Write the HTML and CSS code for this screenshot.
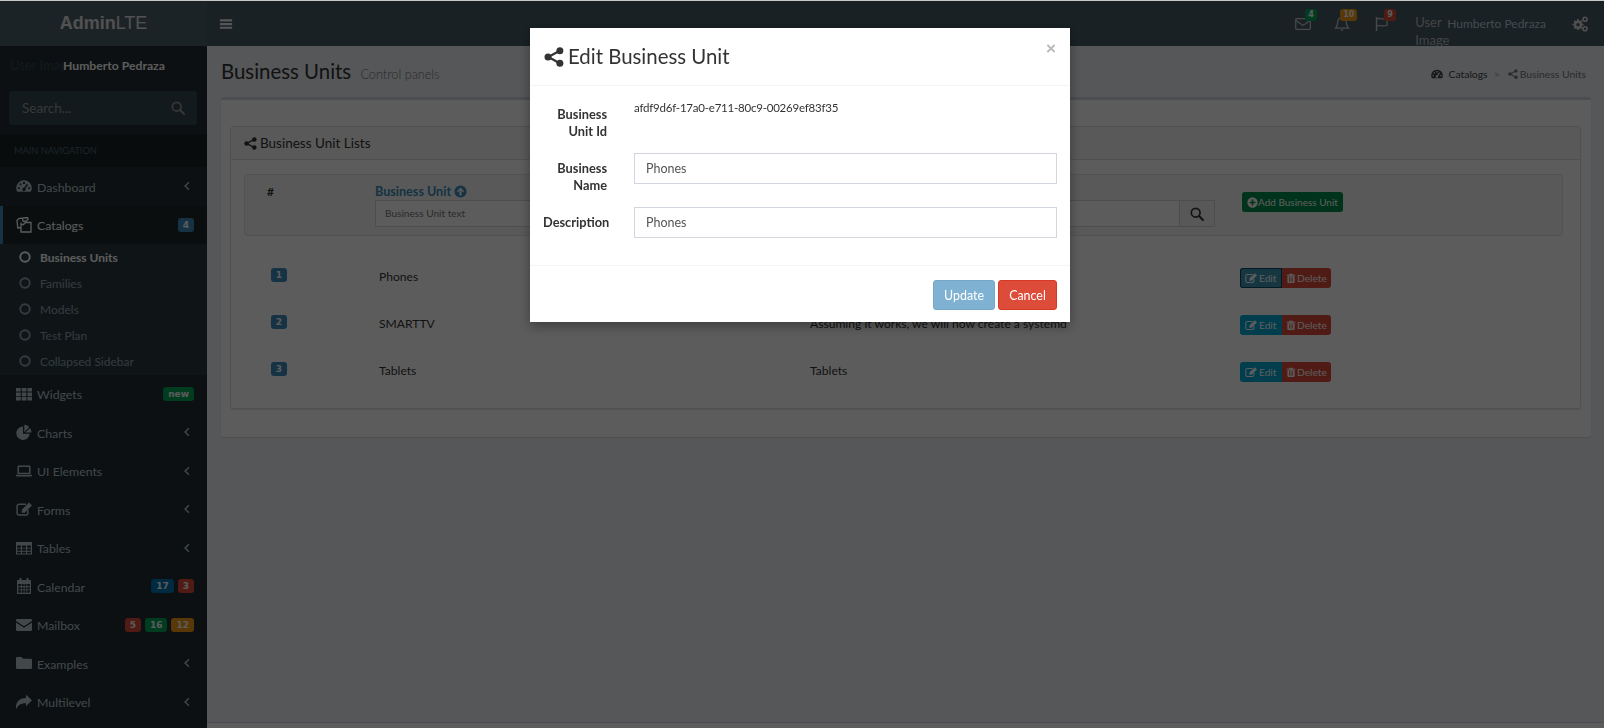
FILE: index.html
```html
<!DOCTYPE html>
<html lang="en">
<head>
<meta charset="utf-8">
<title>Business Units</title>
<link rel="stylesheet" href="styles.css">
</head>
<body>
<svg class="sprite" xmlns="http://www.w3.org/2000/svg">
  <symbol id="i-share" viewBox="0 0 16 16"><path d="M12.5 3 3.5 8l9 5" fill="none" stroke="currentColor" stroke-width="1.7"/><circle cx="12.7" cy="3" r="2.8"/><circle cx="3.2" cy="8" r="2.8"/><circle cx="12.7" cy="13" r="2.8"/></symbol>
  <symbol id="i-dash" viewBox="0 0 16 16"><path fill-rule="evenodd" d="M8 2.2A7.8 7.8 0 0 0 .2 10c0 1.4.4 2.7 1 3.8h13.6c.6-1.100 1-2.400 1-3.800A7.800 7.800 0 0 0 8 2.200zM7 4h2v2H7zM3.600 5.500h1.800v1.800H3.600zM2 9.300h1.800v1.800H2zM12.200 9.300H14v1.800h-1.800zM10.800 5.700l1.300 1-2.600 3.900a1.700 1.700 0 1 1-1.300-.9z"/></symbol>
  <symbol id="i-copy" viewBox="0 0 16 16"><path d="M6.500 1 2.800 1.500 1 3.500 1.800 11l3.200-.5M6.500 1 7 4.500M7 4.500l3.500-.5 1.500-1.800-.4-1.700-4.600.5M5 5.500V15h10V5.500H9.500L7.500 7.500H5" fill="none" stroke="currentColor" stroke-width="1.300"/></symbol>
  <symbol id="i-circle" viewBox="0 0 16 16"><circle cx="8" cy="8" r="5.400" fill="none" stroke="currentColor" stroke-width="2.200"/></symbol>
  <symbol id="i-th" viewBox="0 0 16 16"><path d="M0 2h4.700v3.600H0zM5.700 2h4.700v3.600H5.700zM11.400 2H16v3.600h-4.600zM0 6.400h4.700V10H0zM5.700 6.400h4.700V10H5.700zM11.400 6.400H16V10h-4.600zM0 10.800h4.700v3.600H0zM5.700 10.800h4.700v3.600H5.700zM11.400 10.800H16v3.600h-4.600z"/></symbol>
  <symbol id="i-pie" viewBox="0 0 16 16"><path d="M7 2.500a6.700 6.700 0 1 0 6.700 7.200H7z"/><path d="M8.300.8v7.500l4.900-5.400A7 7 0 0 0 8.300.8zM14 4l-4.600 4.600H15.500A7 7 0 0 0 14 4z"/></symbol>
  <symbol id="i-laptop" viewBox="0 0 16 16"><path fill-rule="evenodd" d="M2.500 2.500h11a1 1 0 0 1 1 1V11h-13V3.500a1 1 0 0 1 1-1zM3 4v5.800h10V4zM0 11.800h16v.8a1 1 0 0 1-1 1H1a1 1 0 0 1-1-1z"/></symbol>
  <symbol id="i-edit" viewBox="0 0 16 16"><path d="M10 3.200H3a1.900 1.900 0 0 0-1.900 1.900v7A1.900 1.900 0 0 0 3 14h7a1.900 1.900 0 0 0 1.900-1.900V9" fill="none" stroke="currentColor" stroke-width="1.400"/><path d="M13 1.500 16 4.500 8.800 11.700H5.800V8.700z"/></symbol>
  <symbol id="i-table" viewBox="0 0 16 16"><path fill-rule="evenodd" d="M0 2h16v12.500H0zM1.200 5.500v2.200h3.700V5.500zM6 5.500v2.200h4V5.500zM11.100 5.500v2.200h3.700V5.500zM1.200 8.600v2.200h3.700V8.600zM6 8.600v2.200h4V8.600zM11.100 8.600v2.200h3.700V8.600zM1.200 11.700v1.800h3.700v-1.800zM6 11.700v1.800h4v-1.800zM11.100 11.700v1.800h3.700v-1.800z"/></symbol>
  <symbol id="i-cal" viewBox="0 0 16 16"><path fill-rule="evenodd" d="M3.500 0h2v2h5V0h2v2H15v14H1V2h2.500zM2.200 6v2.300h2.700V6zM5.700 6v2.300h2V6zM8.500 6v2.300h2V6zM11.300 6v2.300h2.500V6zM2.200 9.200v2.200h2.700V9.200zM5.700 9.200v2.200h2V9.200zM8.500 9.200v2.200h2V9.200zM11.300 9.200v2.200h2.500V9.200zM2.200 12.300v2.500h2.700v-2.500zM5.700 12.300v2.500h2v-2.500zM8.500 12.300v2.500h2v-2.500zM11.300 12.300v2.500h2.500v-2.500z"/></symbol>
  <symbol id="i-mail" viewBox="0 0 16 16"><path d="M0 3.300A1.300 1.300 0 0 1 1.300 2h13.400A1.300 1.300 0 0 1 16 3.300v.6L8 9.300 0 3.900zM0 5.600l8 5.200 8-5.200v7.100a1.300 1.300 0 0 1-1.300 1.300H1.300A1.300 1.300 0 0 1 0 12.700z"/></symbol>
  <symbol id="i-mailo" viewBox="0 0 16 16"><rect x=".7" y="2.700" width="14.600" height="10.600" rx="1" fill="none" stroke="currentColor" stroke-width="1.300"/><path d="M1 4.500 8 9.500l7-5" fill="none" stroke="currentColor" stroke-width="1.300"/></symbol>
  <symbol id="i-folder" viewBox="0 0 16 16"><path d="M1.300 2h4.200l1.500 1.800h7.700a1.300 1.300 0 0 1 1.300 1.300v7.600a1.300 1.300 0 0 1-1.300 1.300H1.300A1.300 1.300 0 0 1 0 12.700V3.300A1.300 1.300 0 0 1 1.300 2z"/></symbol>
  <symbol id="i-fwd" viewBox="0 0 16 16"><path d="M16 6.200 10 .8v3.100C4.300 4 .6 6.700 0 12.200c0 1.100.4 2.300.7 3 .5-3.900 4-6.100 9.300-6v3.100z"/></symbol>
  <symbol id="i-left" viewBox="0 0 16 16"><path d="M10.500 3 5.500 8l5 5" fill="none" stroke="currentColor" stroke-width="2"/></symbol>
  <symbol id="i-search" viewBox="0 0 16 16"><circle cx="6.500" cy="6.500" r="5" fill="none" stroke="currentColor" stroke-width="1.900"/><path d="m10.300 10.300 4.500 4.500" stroke="currentColor" stroke-width="2.300" stroke-linecap="round"/></symbol>
  <symbol id="i-bars" viewBox="0 0 16 16"><path d="M1 2.500h14v2.500H1zM1 6.800h14v2.500H1zM1 11h14v2.500H1z"/></symbol>
  <symbol id="i-bell" viewBox="0 0 16 16"><path d="M8 1.800c-2.700 0-4.300 2-4.300 4.400 0 3.100-1 4.700-2.200 6h13c-1.200-1.300-2.200-2.900-2.200-6C12.300 3.800 10.700 1.800 8 1.800z" fill="none" stroke="currentColor" stroke-width="1.300"/><path d="M6.300 13.500a1.800 1.800 0 0 0 3.400 0zM7.200.5h1.600v1.500H7.200z"/></symbol>
  <symbol id="i-flag" viewBox="0 0 16 16"><path d="M2.500 1v14" stroke="currentColor" stroke-width="1.500"/><path d="M3 3c3-1.500 5 .8 10-.5v7c-5 1.500-7-1-10 .5" fill="none" stroke="currentColor" stroke-width="1.300"/></symbol>
  <symbol id="i-gears" viewBox="0 0 16 16"><path fill-rule="evenodd" d="M5.500 3.200 6.700 3l.4 1.400 1 .5 1.300-.7.9.9-.7 1.300.5 1.100 1.400.4v1.300l-1.400.4-.5 1.100.7 1.300-.9.9-1.300-.7-1 .5-.4 1.400H5.300l-.4-1.400-1-.5-1.300.7-.9-.9.7-1.300-.5-1.100L.5 9.300V8l1.400-.4.5-1.100-.7-1.300.9-.9 1.300.7 1-.5.4-1.400zM6 6.900a1.800 1.800 0 1 0 0 3.600 1.800 1.800 0 0 0 0-3.600z"/><circle cx="13" cy="3.200" r="2" fill="none" stroke="currentColor" stroke-width="1.600"/><circle cx="13" cy="12.700" r="2" fill="none" stroke="currentColor" stroke-width="1.600"/></symbol>
  <symbol id="i-up" viewBox="0 0 16 16"><path fill-rule="evenodd" d="M8 .5a7.500 7.500 0 1 0 0 15 7.500 7.500 0 0 0 0-15zM8 3l4.500 4.600-1.300 1.200-1.900-1.900V13H6.700V6.900L4.800 8.800 3.500 7.600z"/></symbol>
  <symbol id="i-plus" viewBox="0 0 16 16"><path fill-rule="evenodd" d="M8 .5a7.500 7.500 0 1 0 0 15 7.500 7.500 0 0 0 0-15zM6.800 3.500h2.400v3.300h3.300v2.400H9.200v3.300H6.800V9.200H3.500V6.800h3.300z"/></symbol>
  <symbol id="i-trash" viewBox="0 0 16 16"><path fill-rule="evenodd" d="M5.500 1h5l1 1.800H15v1.500H1V2.800h3.500zM2.200 5h11.600v9.500A1.500 1.500 0 0 1 12.300 16H3.700a1.500 1.500 0 0 1-1.500-1.500zM5 6.800v7h1.200v-7zM7.400 6.800v7h1.200v-7zM9.800 6.800v7H11v-7z"/></symbol>
</svg>

<div class="app">
  <header class="topbar">
    <a class="logo"><b>Admin</b>LTE</a>
    <span class="toggle"><svg class="ic ic-14"><use href="#i-bars"/></svg></span>
    <nav class="top-menu">
      <span class="top-icon icon-mail"><svg class="ic ic-16"><use href="#i-mailo"/></svg><span class="pill pill-top green">4</span></span>
      <span class="top-icon icon-bell"><svg class="ic ic-16"><use href="#i-bell"/></svg><span class="pill pill-top amber">10</span></span>
      <span class="top-icon icon-flag"><svg class="ic ic-16"><use href="#i-flag"/></svg><span class="pill pill-top red">9</span></span>
      <span class="user-image">User Image</span>
      <span class="user-name">Humberto Pedraza</span>
      <span class="gears"><svg class="ic ic-16"><use href="#i-gears"/></svg></span>
    </nav>
  </header>

  <div class="shell">
    <aside class="sidebar">
      <div class="user-panel"><span class="panel-img">User Image</span><strong class="panel-name">Humberto Pedraza</strong></div>
      <div class="side-search"><span>Search...</span><svg class="ic ic-14"><use href="#i-search"/></svg></div>
      <div class="nav-head">MAIN NAVIGATION</div>
      <ul class="nav">
        <li class="nav-item"><svg class="ic ic-16"><use href="#i-dash"/></svg><span class="nav-label">Dashboard</span><svg class="ic ic-caret"><use href="#i-left"/></svg></li>
        <li class="nav-item active"><svg class="ic ic-16"><use href="#i-copy"/></svg><span class="nav-label">Catalogs</span><span class="pill blue">4</span></li>
        <li class="subnav">
          <div class="sub-item current"><svg class="ic ic-14"><use href="#i-circle"/></svg>Business Units</div>
          <div class="sub-item"><svg class="ic ic-14"><use href="#i-circle"/></svg>Families</div>
          <div class="sub-item"><svg class="ic ic-14"><use href="#i-circle"/></svg>Models</div>
          <div class="sub-item"><svg class="ic ic-14"><use href="#i-circle"/></svg>Test Plan</div>
          <div class="sub-item"><svg class="ic ic-14"><use href="#i-circle"/></svg>Collapsed Sidebar</div>
        </li>
        <li class="nav-item"><svg class="ic ic-16"><use href="#i-th"/></svg><span class="nav-label">Widgets</span><span class="pill green">new</span></li>
        <li class="nav-item"><svg class="ic ic-16"><use href="#i-pie"/></svg><span class="nav-label">Charts</span><svg class="ic ic-caret"><use href="#i-left"/></svg></li>
        <li class="nav-item"><svg class="ic ic-16"><use href="#i-laptop"/></svg><span class="nav-label">UI Elements</span><svg class="ic ic-caret"><use href="#i-left"/></svg></li>
        <li class="nav-item"><svg class="ic ic-16"><use href="#i-edit"/></svg><span class="nav-label">Forms</span><svg class="ic ic-caret"><use href="#i-left"/></svg></li>
        <li class="nav-item"><svg class="ic ic-16"><use href="#i-table"/></svg><span class="nav-label">Tables</span><svg class="ic ic-caret"><use href="#i-left"/></svg></li>
        <li class="nav-item"><svg class="ic ic-16"><use href="#i-cal"/></svg><span class="nav-label">Calendar</span><span class="pill blue-dark">17</span><span class="pill red">3</span></li>
        <li class="nav-item"><svg class="ic ic-16"><use href="#i-mail"/></svg><span class="nav-label">Mailbox</span><span class="pill red">5</span><span class="pill green">16</span><span class="pill amber">12</span></li>
        <li class="nav-item"><svg class="ic ic-16"><use href="#i-folder"/></svg><span class="nav-label">Examples</span><svg class="ic ic-caret"><use href="#i-left"/></svg></li>
        <li class="nav-item"><svg class="ic ic-16"><use href="#i-fwd"/></svg><span class="nav-label">Multilevel</span><svg class="ic ic-caret"><use href="#i-left"/></svg></li>
      </ul>
    </aside>

    <main class="main">
      <section class="page-head">
        <h1>Business Units <small>Control panels</small></h1>
        <ol class="crumbs">
          <li class="crumb-root"><svg class="ic ic-12"><use href="#i-dash"/></svg>Catalogs</li>
          <li class="crumb-sep">&gt;</li>
          <li class="crumb-now"><svg class="ic ic-10"><use href="#i-share"/></svg>Business Units</li>
        </ol>
      </section>

      <section class="box">
        <div class="panel">
          <div class="panel-head"><svg class="ic ic-13"><use href="#i-share"/></svg>Business Unit Lists</div>
          <div class="panel-body">
            <div class="well">
              <div class="col-num">#</div>
              <div class="col-name">
                <div class="sort-title">Business Unit <svg class="ic ic-13"><use href="#i-up"/></svg></div>
                <div class="field"><span>Business Unit text</span></div>
              </div>
              <div class="col-desc">
                <div class="sort-title">Description</div>
                <div class="search-group"><div class="field"></div><span class="search-btn"><svg class="ic ic-14"><use href="#i-search"/></svg></span></div>
              </div>
              <div class="col-add"><span class="btn btn-green"><svg class="ic ic-11"><use href="#i-plus"/></svg>Add Business Unit</span></div>
            </div>

            <div class="row">
              <div class="cell-num"><span class="pill blue num">1</span></div>
              <div>Phones</div>
              <div>Phones</div>
              <div class="actions"><span class="btn btn-teal focus"><svg class="ic ic-12"><use href="#i-edit"/></svg>Edit</span><span class="btn btn-red"><svg class="ic ic-10"><use href="#i-trash"/></svg>Delete</span></div>
            </div>
            <div class="row">
              <div class="cell-num"><span class="pill blue num">2</span></div>
              <div>SMARTTV</div>
              <div>Assuming it works, we will now create a systemd</div>
              <div class="actions"><span class="btn btn-teal"><svg class="ic ic-12"><use href="#i-edit"/></svg>Edit</span><span class="btn btn-red"><svg class="ic ic-10"><use href="#i-trash"/></svg>Delete</span></div>
            </div>
            <div class="row">
              <div class="cell-num"><span class="pill blue num">3</span></div>
              <div>Tablets</div>
              <div>Tablets</div>
              <div class="actions"><span class="btn btn-teal"><svg class="ic ic-12"><use href="#i-edit"/></svg>Edit</span><span class="btn btn-red"><svg class="ic ic-10"><use href="#i-trash"/></svg>Delete</span></div>
            </div>
          </div>
        </div>
      </section>

      <footer class="foot"></footer>
    </main>
  </div>
</div>

<div class="backdrop"></div>
<div class="modal">
  <div class="modal-head">
    <h4><svg class="ic ic-20"><use href="#i-share"/></svg>Edit Business Unit</h4>
    <span class="close">×</span>
  </div>
  <div class="modal-body">
    <div class="form-row row-id">
      <label>Business Unit Id</label>
      <div class="value">afdf9d6f-17a0-e711-80c9-00269ef83f35</div>
    </div>
    <div class="form-row">
      <label>Business Name</label>
      <input class="input" type="text" value="Phones">
    </div>
    <div class="form-row">
      <label>Description</label>
      <input class="input" type="text" value="Phones">
    </div>
  </div>
  <div class="modal-foot">
    <button class="mbtn update" type="button">Update</button>
    <button class="mbtn cancel" type="button">Cancel</button>
  </div>
</div>
</body>
</html>
```

FILE: styles.css
```css
* { box-sizing: border-box; }
html, body { height: 100%; margin: 0; }
body {
  padding-top: 1px;
  background: #c8c8c8;
  overflow: hidden;
  font-family: "Lato", "Noto Sans", sans-serif;
  font-size: 12.3px;
  line-height: 1.25;
  color: #333;
}
.sprite { display: none; }
.ic { display: inline-block; fill: currentColor; flex: none; vertical-align: -2px; }
.ic-10 { width: 10px; height: 10px; }
.ic-11 { width: 11px; height: 11px; }
.ic-12 { width: 12px; height: 12px; }
.ic-13 { width: 13px; height: 13px; }
.ic-14 { width: 14px; height: 14px; }
.ic-16 { width: 16px; height: 16px; }
.ic-20 { width: 20px; height: 20px; }
.ic-caret { width: 12px; height: 12px; margin-left: auto; margin-right: 1px; margin-top: -2px; }

.app { height: 727px; display: flex; flex-direction: column; }

/* top bar */
.topbar { height: 45px; flex: none; display: flex; align-items: center; background: #465c66; color: #c8c8c8; }
.logo { width: 207px; text-align: center; font: 18px "Liberation Sans", Arial, sans-serif; color: #e0e0e0; background: #4c626c; align-self: stretch; line-height: 44px; }
.toggle { margin-left: 12px; color: #eee; display: flex; }
.top-menu { margin-left: auto; display: flex; align-items: center; height: 100%; padding-right: 16px; }
.top-icon { position: relative; display: flex; color: #c8c8c8; }
.icon-mail { margin-right: 23px; }
.icon-bell { margin-right: 24px; }
.icon-flag { margin-right: 25px; }
.pill-top { position: absolute; top: -7px; left: 10px; }
.icon-bell .pill-top { left: 6px; }
.user-image { width: 32px; color: #bdbdbd; font-size: 13px; line-height: 18px; padding-top: 12px; align-self: flex-start; }
.user-name { color: #b9cfd6; font-size: 12px; margin-right: 26px; }
.gears { display: flex; color: #dcdcdc; }

.shell { flex: 1; min-height: 0; display: flex; }

/* sidebar */
.sidebar { width: 207px; flex: none; background: #222d32; color: #b8c7ce; overflow: hidden; }
.user-panel { height: 45px; display: flex; align-items: center; font-size: 12.2px; color: #fff; padding: 0 0 6px 10px; white-space: nowrap; overflow: hidden; }
.panel-img { width: 53px; flex: none; color: #374850; overflow: hidden; font-size: 13px; }
.panel-name { font-weight: 700; }
.side-search { margin: 0 10px 0 9px; height: 34px; background: #374850; border: 1px solid #374850; border-radius: 3px; display: flex; align-items: center; justify-content: space-between; padding: 0 11px 0 12px; color: #999; font-size: 13.5px; }
.nav-head { margin-top: 9px; height: 33px; line-height: 34px; padding-left: 14px; background: #1a2226; color: #4b646f; font-size: 9.2px; }
.nav { list-style: none; margin: 0; padding: 0; }
.nav-item { height: 38.500px; display: flex; align-items: center; gap: 4px; padding: 2px 13px 0 16px; color: #b8c7ce; }
.nav-item > .ic-16 { margin-top: -2px; }
.nav-item .nav-label { margin-left: 1px; margin-right: auto; }
.nav-item.active { background: #1e282c; color: #fff; border-left: 3px solid #3c8dbc; padding-left: 13px; }
.subnav { background: #2c3b41; height: 130.500px; display: flex; flex-direction: column; }
.sub-item { height: 26px; display: flex; align-items: center; gap: 8px; padding-left: 18px; color: #8aa4af; font-size: 12px; }
.sub-item.current { color: #fff; font-weight: 700; }

/* pills */
.pill { display: inline-block; min-width: 16px; padding: 0 5px; height: 14px; border-radius: 3px; text-align: center; font: 700 9px/14px "DejaVu Sans", sans-serif; color: #fff; }
.pill-top { height: 12px; line-height: 12px; min-width: 10px; padding: 0 3px; font-size: 8px; }
.pill.num { padding: 0; }
.nav-item .pill { margin-top: -2px; }
.blue { background: #3c8dbc; }
.blue-dark { background: #0073b7; }
.green { background: #00a65a; }
.amber { background: #f39c12; }
.red { background: #dd4b39; }

/* main */
.main { flex: 1; min-width: 0; display: flex; flex-direction: column; background: #ecf0f5; }
.page-head { height: 51px; flex: none; display: flex; align-items: center; justify-content: space-between; padding: 1px 18px 0 14px; }
.page-head h1 { margin: 0; font-size: 20.4px; font-weight: 400; color: #333; }
.page-head small { font-size: 12.7px; font-weight: 300; color: #777; margin-left: 4px; }
.crumbs { list-style: none; margin: 0; padding: 4px 0 0; display: flex; align-items: center; gap: 6px; font-size: 10.4px; color: #444; }
.crumbs li { display: flex; align-items: center; gap: 5px; }
.crumb-now { gap: 2px !important; color: #777; margin-left: 2px; }
.crumb-sep { color: #999; }

.box { margin: 0 13px 0 14px; height: 340px; background: #fff; border-top: 3px solid #d2d6de; border-radius: 3px; box-shadow: 0 1px 1px rgba(0,0,0,.1); padding: 26px 10px 0 9px; flex: none; }
.panel { height: 283px; border: 1px solid #ddd; border-radius: 3px; box-shadow: 0 1px 1px rgba(0,0,0,.1); }
.panel-head { height: 33px; background: #f5f5f5; border-bottom: 1px solid #ddd; display: flex; align-items: center; gap: 3px; padding-left: 13px; color: #333; font-size: 13.5px; }
.panel-body { padding: 14px 17px 0 13px; }

.well { height: 62px; background: #f5f5f5; border: 1px solid #e3e3e3; border-radius: 4px; display: grid; grid-template-columns: 130px 430px 437px 1fr; }
.col-num { padding: 9px 0 0 22px; font-weight: 700; font-size: 12px; color: #333; }
.sort-title { padding-top: 9px; color: #3c8dbc; font-weight: 700; font-size: 12.6px; line-height: 16px; white-space: nowrap; height: 25px; }
.col-desc .sort-title { color: transparent; }
.field { height: 27px; width: 100%; border: 1px solid #d2d6de; background: #fff; font-size: 10.100px; color: #777; padding: 0 9px; display: flex; align-items: center; }
.col-name .field { width: 300px; }
.search-group { display: flex; width: 410px; }
.search-group .field { flex: 1; }
.search-btn { width: 35px; height: 27px; flex: none; border: 1px solid #d2d6de; border-left: 0; background: #f4f4f4; color: #333; display: flex; align-items: center; justify-content: center; }
.col-add { padding-top: 17px; }

.btn { display: inline-flex; align-items: center; gap: 2px; height: 20px; padding: 0 5px; font-size: 10.200px; color: #fff; white-space: nowrap; }
.btn-green { background: #008d4c; border-radius: 3px; width: 101px; gap: 0; font-size: 10px; }
.btn-teal { background: #00acd6; border-radius: 3px 0 0 3px; width: 42px; }
.btn-teal.focus { background: #3e9ab8; box-shadow: inset 0 0 0 1px #0a4a66; }
.btn-red { background: #dd4b39; border-radius: 0 3px 3px 0; width: 49px; padding: 0 0 0 4px; gap: 1px; }

.row { height: 47px; display: grid; grid-template-columns: 131px 431px 434px 1fr; align-items: start; color: #333; font-size: 12.100px; }
.well + .row { margin-top: 32px; }
.row > div { padding-left: 4px; padding-top: 1px; }
.row .cell-num { padding-left: 27px; padding-top: 0; }
.row .actions { padding-left: 0; padding-top: 0; display: flex; }
.num { display: block; width: 16px; min-width: 16px; }

.foot { margin-top: auto; height: 6px; background: #fff; border-top: 1px solid #d2d6de; flex: none; }

/* modal layer */
.backdrop { position: fixed; left: 0; right: 0; top: 1px; bottom: 0; background: rgba(0,0,0,.64); }
.modal { position: fixed; left: 530px; top: 28px; width: 540px; height: 294px; background: #fff; box-shadow: 0 4px 12px rgba(0,0,0,.35); color: #333; }
.modal-head { height: 58px; border-bottom: 1px solid #f4f4f4; padding: 0 14px; display: flex; align-items: center; }
.modal-head h4 { margin: 0; font-weight: 400; font-size: 20.4px; display: flex; align-items: center; gap: 4px; }
.close { position: absolute; right: 14px; top: 11px; font: 700 17px/20px "Liberation Sans", Arial, sans-serif; color: #b8b8b8; }
.modal-body { height: 180px; border-bottom: 1px solid #f4f4f4; padding: 10px 13px 0 13px; }
.form-row { display: grid; grid-template-columns: 64px 423px; column-gap: 27px; height: 54px; align-items: start; }
.form-row.row-id { height: 57px; }
.form-row label { font-weight: 700; text-align: right; font-size: 12.8px; line-height: 17px; padding-top: 7px; }
.form-row.row-id label { padding-top: 10px; }
.value { font-size: 11.5px; letter-spacing: -.22px; line-height: 17px; padding-top: 3px; white-space: nowrap; }
.input { height: 31px; width: 423px; border: 1px solid #d2d6de; padding: 0 11px; font: 12.5px "Lato", sans-serif; color: #555; outline: 0; background: #fff; }
.modal-foot { display: flex; justify-content: flex-end; gap: 3px; padding: 14px 13px 0; }
.mbtn { height: 30px; border-radius: 3px; font: 12.4px "Lato", sans-serif; color: #fff; padding: 0; }
.update { width: 62px; background: #7fb2d2; border: 1px solid #75a8c8; }
.cancel { width: 59px; background: #dd4b39; border: 1px solid #d73925; }
```
